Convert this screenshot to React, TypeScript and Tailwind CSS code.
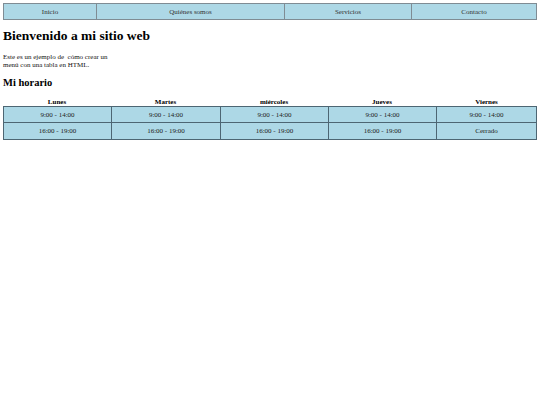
const nav = [
  { label: "Inicio", w: "w-[93px]" },
  { label: "Quiénes somos", w: "w-[188px]" },
  { label: "Servicios", w: "w-[127px]" },
  { label: "Contacto", w: "" },
];

const days = ["Lunes", "Martes", "miércoles", "Jueves", "Viernes"];
const rows = [
  ["9:00 - 14:00", "9:00 - 14:00", "9:00 - 14:00", "9:00 - 14:00", "9:00 - 14:00"],
  ["16:00 - 19:00", "16:00 - 19:00", "16:00 - 19:00", "16:00 - 19:00", "Cerrado"],
];

export default function App() {
  return (
    <div className="min-h-[405px] w-[540px] bg-white px-[3px] pt-[3px] text-black font-['Liberation_Serif',serif] text-[7px] leading-[8px]">
      {/* Menu */}
      <div className="flex h-[17px] border border-[#7f8c94] bg-[#add8e6]">
        {nav.map((item, i) => (
          <div
            key={item.label}
            className={`flex items-center justify-center text-[#333] ${item.w} ${
              i === nav.length - 1 ? "flex-1" : "border-r border-[#7f8c94]"
            }`}
          >
            {item.label}
          </div>
        ))}
      </div>

      <h1 className="mt-[7px] text-[13.5px] leading-[18px] font-bold">Bienvenido a mi sitio web</h1>

      <p className="mt-[8px] w-[106px] text-[#111]">
        Este es un ejemplo de&nbsp; cómo crear un menú con una tabla en HTML.
      </p>

      <h2 className="mt-[7px] text-[10.5px] leading-[14px] font-bold">Mi horario</h2>

      {/* Schedule */}
      <div className="mt-[7px]">
        <div className="grid grid-cols-[108px_109px_108px_108px_1fr] h-[9px] font-bold">
          {days.map((d) => (
            <div key={d} className="flex items-end justify-center">
              {d}
            </div>
          ))}
        </div>
        <div className="border border-[#4d6673] bg-[#add8e6]">
          {rows.map((row, r) => (
            <div
              key={r}
              className={`grid grid-cols-[108px_109px_108px_108px_1fr] h-[16px] ${
                r === 0 ? "border-b border-[#4d6673]" : ""
              }`}
            >
              {row.map((cell, c) => (
                <div
                  key={c}
                  className={`flex items-center justify-center text-[#222] ${
                    c < row.length - 1 ? "border-r border-[#4d6673]" : ""
                  }`}
                >
                  {cell}
                </div>
              ))}
            </div>
          ))}
        </div>
      </div>
    </div>
  );
}
